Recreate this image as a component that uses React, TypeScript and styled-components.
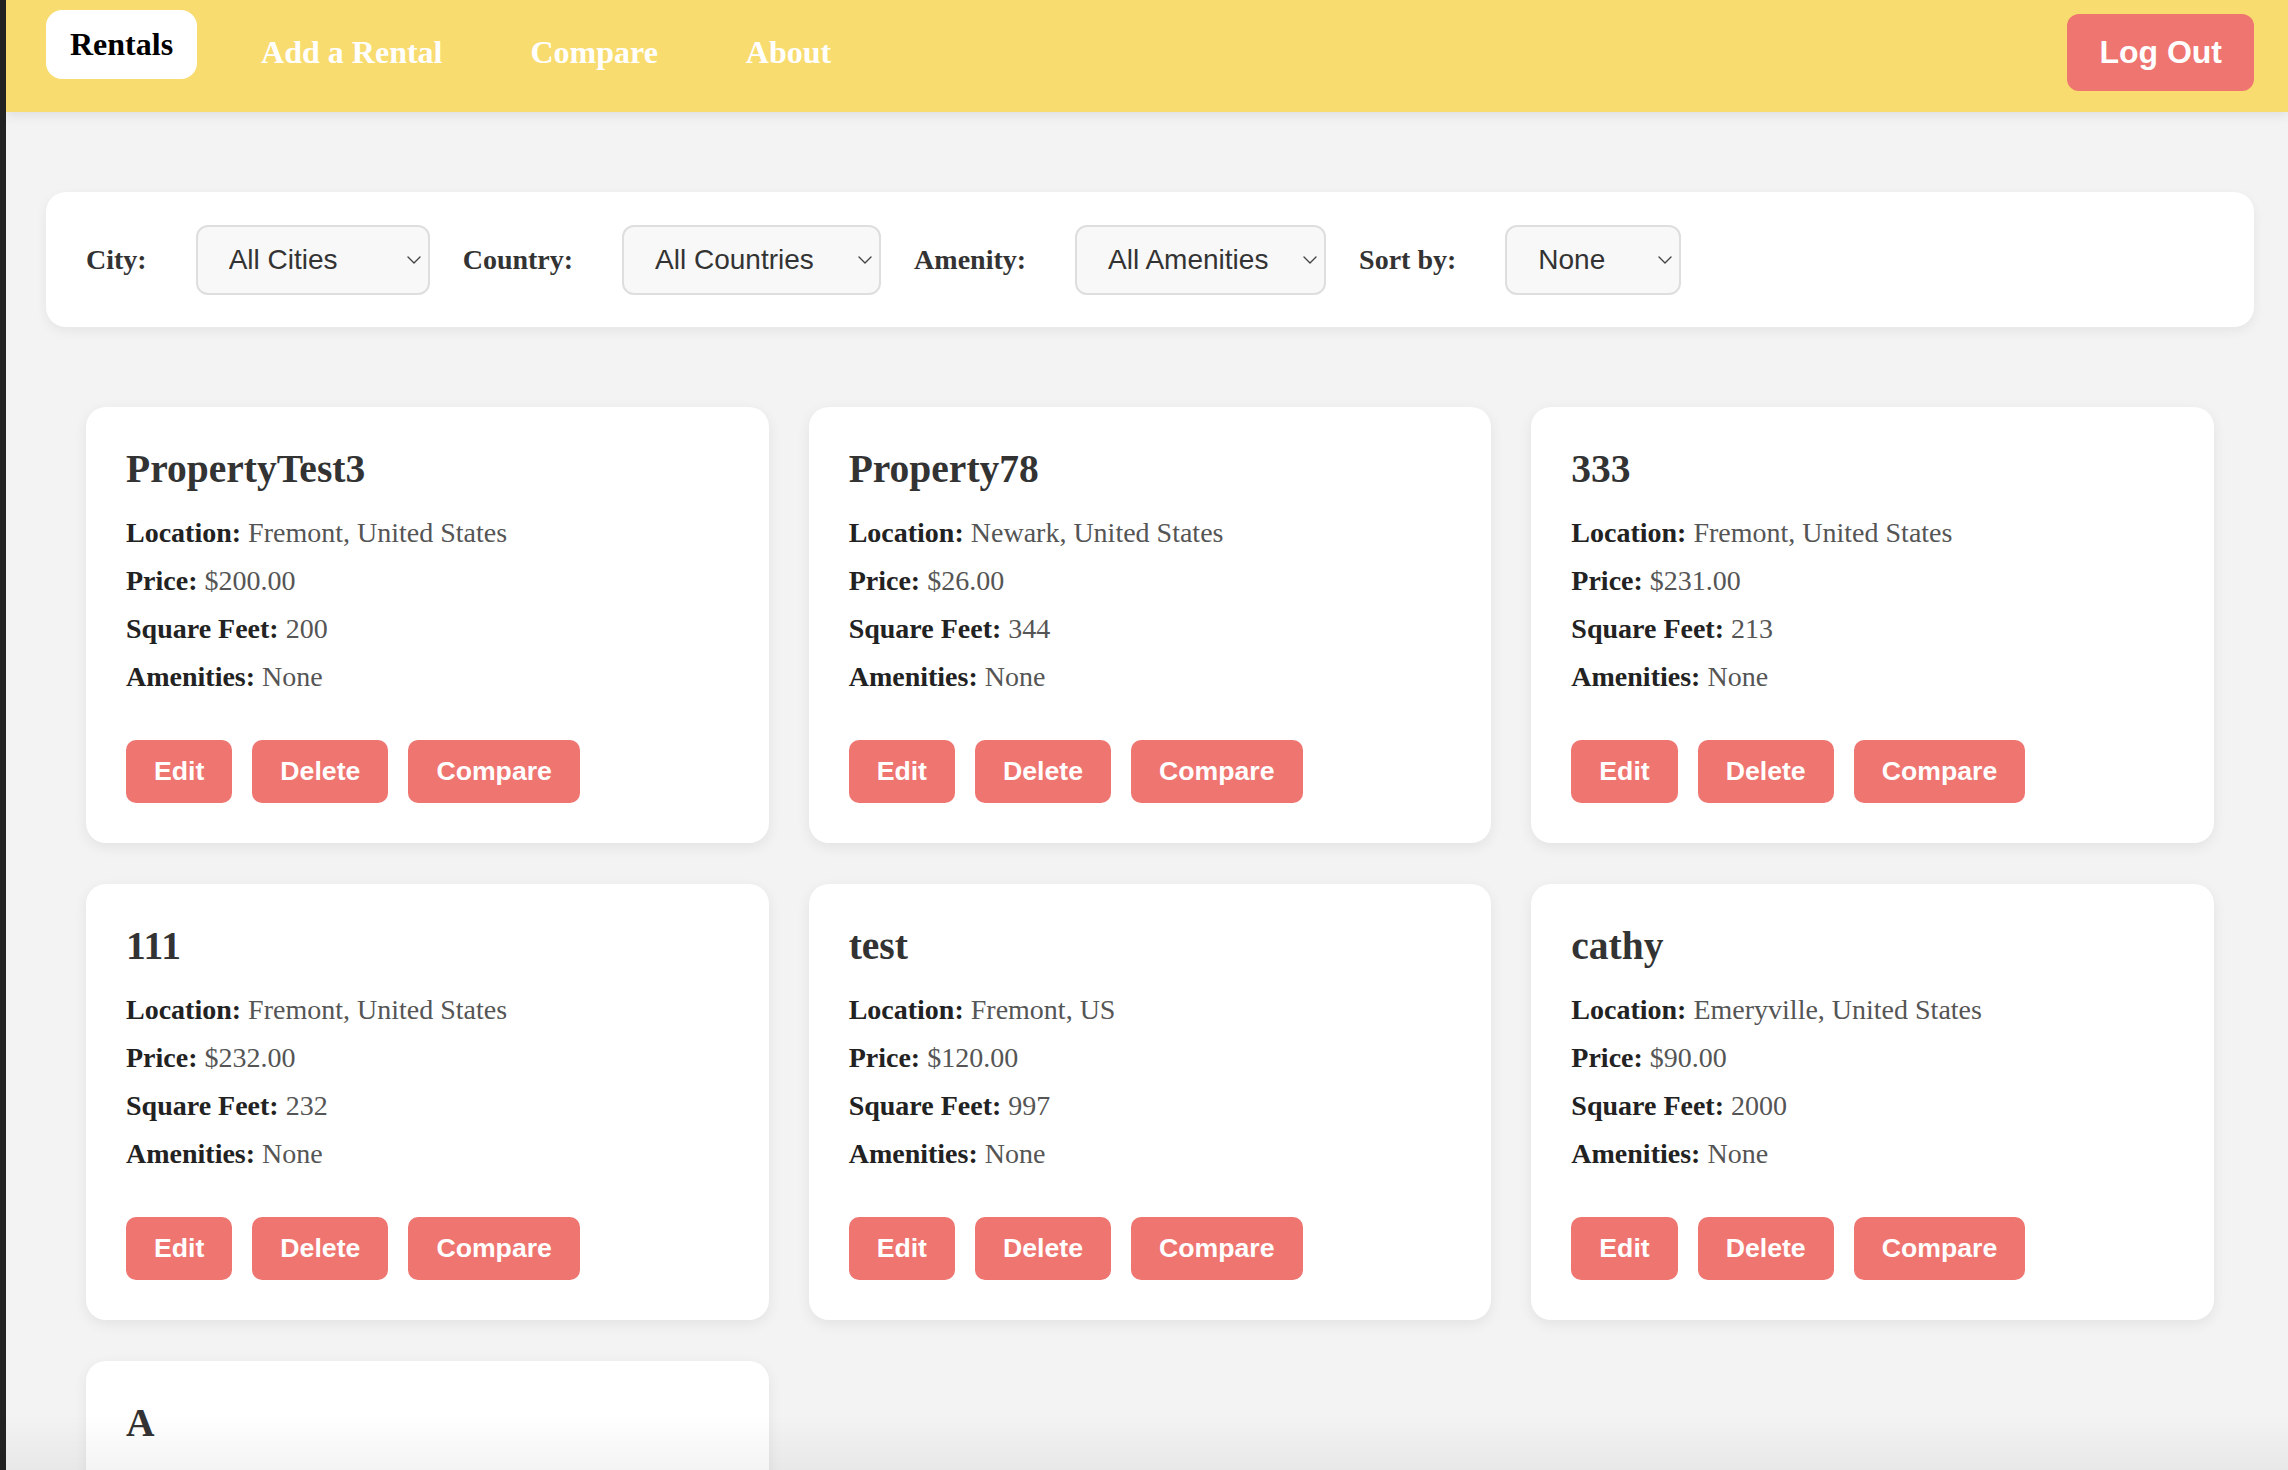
import React from "react";
import styled, { createGlobalStyle } from "styled-components";

const GlobalStyle = createGlobalStyle`
  html, body { margin: 0; padding: 0; background: #f3f3f3; }
  body { font-family: "Liberation Serif", "Times New Roman", serif; }
  * { box-sizing: border-box; }
`;

const Page = styled.div`
  min-height: 100vh;
  border-left: 6px solid #232323;
  background: #f3f3f3;
  padding-bottom: 120px;
`;

const NavBar = styled.nav`
  height: 112px;
  background: #f8dc6f;
  display: flex;
  align-items: flex-start;
  justify-content: space-between;
  padding: 10px 34px 0 40px;
  box-shadow: 0 4px 10px rgba(0, 0, 0, 0.08);
  position: relative;
  z-index: 1;
`;

const NavLinks = styled.div`
  display: flex;
  align-items: flex-start;
  gap: 40px;
`;

const NavLink = styled.a<{ $active?: boolean }>`
  display: block;
  font-family: "Liberation Serif", "Times New Roman", serif;
  font-weight: 700;
  font-size: 32px;
  line-height: 37px;
  padding: 16px 24px;
  border-radius: 16px;
  text-decoration: none;
  cursor: pointer;
  margin-top: ${(p) => (p.$active ? "0" : "8px")};
  color: ${(p) => (p.$active ? "#000" : "#fff")};
  background: ${(p) => (p.$active ? "#fff" : "transparent")};
`;

const LogOutButton = styled.button`
  margin-top: 4px;
  height: 77px;
  padding: 0 32px;
  border: none;
  border-radius: 12px;
  background: #ef7571;
  color: #fff;
  font-family: "Liberation Sans", Arial, sans-serif;
  font-weight: 700;
  font-size: 32px;
  line-height: 37px;
  cursor: pointer;
`;

const Main = styled.main`
  padding: 80px 34px 0 40px;
`;

const FilterBar = styled.div`
  height: 135px;
  background: #fff;
  border-radius: 20px;
  box-shadow: 0 4px 12px rgba(0, 0, 0, 0.06);
  padding: 0 40px;
  display: flex;
  align-items: center;
  gap: 33px;
`;

const FilterGroup = styled.div`
  display: flex;
  align-items: center;
  gap: 49px;
`;

const FilterLabel = styled.label`
  font-family: "Liberation Serif", "Times New Roman", serif;
  font-weight: 700;
  font-size: 28px;
  color: #333;
`;

const SelectWrap = styled.div<{ $w: number }>`
  position: relative;
  width: ${(p) => p.$w}px;
  height: 70px;
`;

const Select = styled.select`
  appearance: none;
  -webkit-appearance: none;
  width: 100%;
  height: 100%;
  border: 2px solid #dedede;
  border-radius: 12px;
  background: #f8f8f8;
  color: #333;
  font-family: "Liberation Sans", Arial, sans-serif;
  font-size: 28px;
  padding: 0 40px 0 31px;
  outline: none;
`;

const Chevron = styled.svg`
  position: absolute;
  right: 9px;
  top: 50%;
  margin-top: -4px;
  width: 14px;
  height: 8px;
  pointer-events: none;
`;

const CardGrid = styled.div`
  margin-top: 80px;
  padding: 0 40px;
  display: grid;
  grid-template-columns: repeat(3, 1fr);
  column-gap: 40px;
  row-gap: 41px;
`;

const Card = styled.div`
  background: #fff;
  border-radius: 20px;
  box-shadow: 0 4px 14px rgba(0, 0, 0, 0.07);
  padding: 41px 40px 40px;
`;

const CardTitle = styled.h3`
  margin: 0 0 26px;
  font-family: "Liberation Serif", "Times New Roman", serif;
  font-weight: 700;
  font-size: 39.5px;
  line-height: 43px;
  color: #333;
`;

const Details = styled.div`
  display: flex;
  flex-direction: column;
  gap: 16px;
`;

const Detail = styled.p`
  margin: 0;
  font-family: "Liberation Serif", "Times New Roman", serif;
  font-size: 28px;
  line-height: 32px;
  color: #555;
  strong {
    color: #222;
    font-weight: 700;
  }
`;

const Actions = styled.div`
  margin-top: 47px;
  display: flex;
  gap: 20px;
`;

const ActionButton = styled.button`
  height: 63px;
  padding: 0 28px;
  border: none;
  border-radius: 10px;
  background: #ef7571;
  color: #fff;
  font-family: "Liberation Sans", Arial, sans-serif;
  font-weight: 700;
  font-size: 26.67px;
  cursor: pointer;
`;

const BottomFade = styled.div`
  position: fixed;
  left: 0;
  right: 0;
  bottom: 0;
  height: 56px;
  background: linear-gradient(to bottom, rgba(0, 0, 0, 0), rgba(0, 0, 0, 0.045));
  pointer-events: none;
`;

type Rental = {
  name: string;
  location: string;
  price: string;
  sqft: string;
  amenities: string;
};

const rentals: Rental[] = [
  { name: "PropertyTest3", location: "Fremont, United States", price: "$200.00", sqft: "200", amenities: "None" },
  { name: "Property78", location: "Newark, United States", price: "$26.00", sqft: "344", amenities: "None" },
  { name: "333", location: "Fremont, United States", price: "$231.00", sqft: "213", amenities: "None" },
  { name: "111", location: "Fremont, United States", price: "$232.00", sqft: "232", amenities: "None" },
  { name: "test", location: "Fremont, US", price: "$120.00", sqft: "997", amenities: "None" },
  { name: "cathy", location: "Emeryville, United States", price: "$90.00", sqft: "2000", amenities: "None" },
  { name: "A", location: "Fremont, United States", price: "$100.00", sqft: "100", amenities: "None" },
];

const filters = [
  { label: "City:", value: "All Cities", width: 234 },
  { label: "Country:", value: "All Countries", width: 259 },
  { label: "Amenity:", value: "All Amenities", width: 251 },
  { label: "Sort by:", value: "None", width: 176 },
];

const ChevronIcon = () => (
  <Chevron viewBox="0 0 14 8" fill="none">
    <path d="M1 1l6 6 6-6" stroke="#444" strokeWidth="1.4" strokeLinecap="round" strokeLinejoin="round" />
  </Chevron>
);

export default function App() {
  return (
    <>
      <GlobalStyle />
      <Page>
        <NavBar>
          <NavLinks>
            <NavLink $active>Rentals</NavLink>
            <NavLink>Add a Rental</NavLink>
            <NavLink>Compare</NavLink>
            <NavLink>About</NavLink>
          </NavLinks>
          <LogOutButton>Log Out</LogOutButton>
        </NavBar>
        <Main>
          <FilterBar>
            {filters.map((f) => (
              <FilterGroup key={f.label}>
                <FilterLabel>{f.label}</FilterLabel>
                <SelectWrap $w={f.width}>
                  <Select defaultValue={f.value}>
                    <option>{f.value}</option>
                  </Select>
                  <ChevronIcon />
                </SelectWrap>
              </FilterGroup>
            ))}
          </FilterBar>
          <CardGrid>
            {rentals.map((r) => (
              <Card key={r.name}>
                <CardTitle>{r.name}</CardTitle>
                <Details>
                  <Detail>
                    <strong>Location:</strong> {r.location}
                  </Detail>
                  <Detail>
                    <strong>Price:</strong> {r.price}
                  </Detail>
                  <Detail>
                    <strong>Square Feet:</strong> {r.sqft}
                  </Detail>
                  <Detail>
                    <strong>Amenities:</strong> {r.amenities}
                  </Detail>
                </Details>
                <Actions>
                  <ActionButton>Edit</ActionButton>
                  <ActionButton>Delete</ActionButton>
                  <ActionButton>Compare</ActionButton>
                </Actions>
              </Card>
            ))}
          </CardGrid>
        </Main>
        <BottomFade />
      </Page>
    </>
  );
}
